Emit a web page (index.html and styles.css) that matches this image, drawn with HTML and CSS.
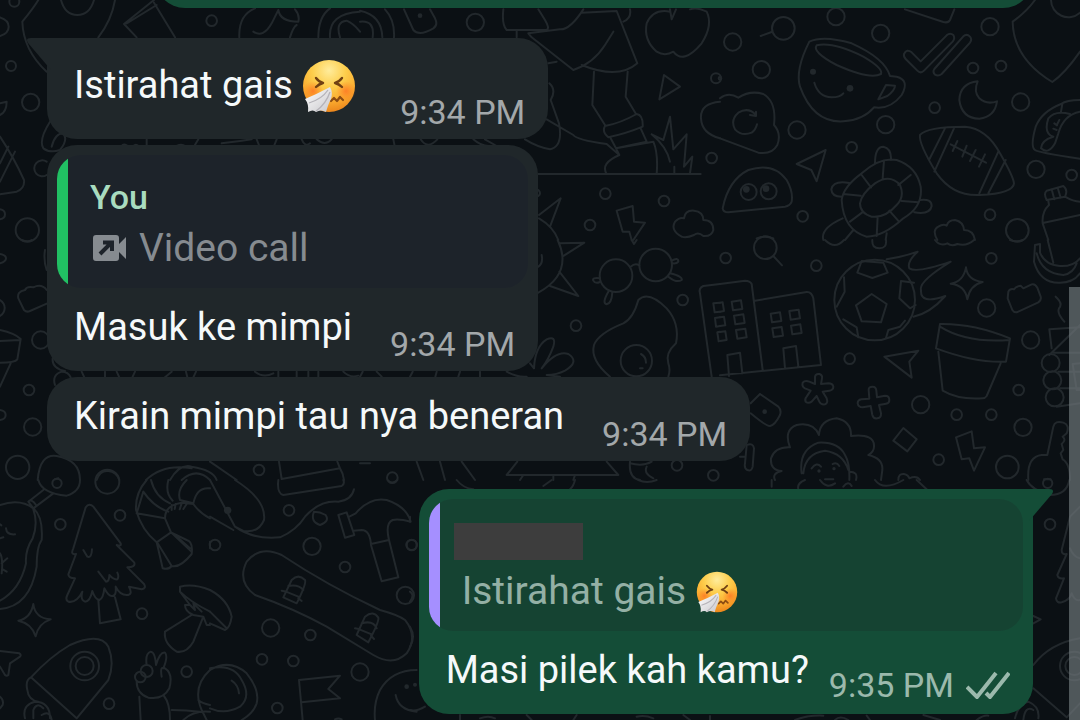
FILE: index.html
```
<!DOCTYPE html>
<html lang="id">
<head>
<meta charset="utf-8">
<meta name="viewport" content="width=device-width, initial-scale=1">
<title>Chat</title>
<link rel="stylesheet" href="styles.css">
</head>
<body>
<svg class="wallpaper" viewBox="0 0 1080 720" preserveAspectRatio="xMinYMin slice" aria-hidden="true">
  <!-- top left -->
  <g transform="scale(.33333)">
    <path d="M115 0Q100 25 67 65Q70 150 140 215M345 0Q335 60 295 112M183 0Q195 45 232 45T282 0M462 0L372 72L410 112M462 8L525 112M380 70L470 15M718 112Q715 45 765 25M760 95Q790 115 815 70L835 30Q840 65 895 65Q900 45 885 28M870 112Q880 80 890 75M955 112Q955 50 990 25M990 112Q985 40 1080 35M1020 112Q1005 65 1040 62Q1060 70 1080 95M0 52Q26 60 26 80T0 108M0 345Q20 335 20 305L0 310M0 410Q40 470 72 540Q75 565 50 575L0 583M45 455L0 545M25 440L0 490M150 365Q115 420 130 445Q150 460 180 450Q205 420 190 400Q165 400 155 440M0 628Q15 630 15 643T0 658M140 485A24 24 0 1 0 140 525"/>
    <path d="M365 438q5-8 15-2M400 438q8-8 15 0M440 418v20M530 438q15-8 25 0M595 418l-12 20M665 430q50-5 90-12M770 418l8 20M830 418l-8 20M905 418q10 25 25 12M950 418q25 22 45 0"/>
    <circle cx="635" cy="62" r="16"/><circle cx="43" cy="5" r="15"/><circle cx="33" cy="198" r="15"/><circle cx="92" cy="307" r="26"/><circle cx="82" cy="690" r="35"/>
  </g>
  <!-- top centre -->
  <g transform="translate(360 0) scale(.33333)">
    <path d="M0 32Q65 45 67 112M75 28Q105 60 102 112M0 65Q45 60 38 112M132 28L160 90Q178 110 220 85Q235 75 225 55L210 28M430 28Q425 75 440 90H560Q570 85 555 60L535 28M670 28Q630 90 600 88L505 100L515 112L640 210Q700 190 735 135L760 95M470 90V112M665 38L770 33L832 190Q775 240 665 195M790 65Q815 55 810 28M702 215L697 315L735 375M803 215L797 290L828 342M735 378Q725 395 745 412Q800 400 848 380Q850 345 830 342Q780 370 735 378M752 415L768 445L860 425L842 385M768 445L880 425Q895 460 890 522M768 445L778 465Q720 490 740 522M565 190L590 185M568 250Q590 270 572 300L597 370Q610 440 570 448Q530 440 495 418M560 358L640 405Q650 420 740 432L778 465M535 522H1022M875 403L910 420L930 350L940 448L980 403L972 500L997 470L990 520M875 403Q920 440 930 485M943 500V522"/>
    <path d="M935 58L930 28M935 58L948 28M930 35Q880 25 860 70Q850 120 890 155Q915 170 940 155Q970 195 1025 130Q1060 75 1040 35Q1010 20 990 28M912 225L960 260L898 298Z"/>
    <path d="M1080 305Q1020 310 1023 355Q1025 400 1080 415M537 645L602 595L570 680M537 655Q580 680 595 720M770 632L818 618L822 665L855 668L820 720M770 632L788 695H808L815 720M965 710Q930 690 945 665Q960 650 972 655Q975 630 1002 632Q1030 635 1030 660Q1060 660 1060 690Q1055 710 1030 708Q1015 695 1002 705Q980 715 965 710M535 570q10 10 0 18M100 418l4 20M182 418q20 32 50 0M340 418q25 22 50 20M375 418l35 20"/>
    <circle cx="180" cy="47" r="7" class="dot"/><circle cx="346" cy="67" r="26"/><circle cx="736" cy="581" r="16"/><circle cx="912" cy="603" r="16"/><circle cx="690" cy="675" r="16"/><circle cx="1055" cy="474" r="16"/><circle cx="1068" cy="235" r="15"/>
  </g>
  <!-- top right -->
  <g transform="translate(720 0) scale(.33333)">
    <circle cx="38" cy="126" r="26"/><circle cx="190" cy="85" r="34"/><path d="M122 108L155 96"/><circle cx="348" cy="50" r="26"/><circle cx="482" cy="100" r="26"/><circle cx="124" cy="209" r="26"/><circle cx="231" cy="390" r="26"/><circle cx="497" cy="374" r="26"/><circle cx="395" cy="442" r="16"/><circle cx="644" cy="323" r="16"/><circle cx="759" cy="204" r="16"/><circle cx="843" cy="198" r="16"/><circle cx="810" cy="80" r="26"/><circle cx="902" cy="306" r="26"/><circle cx="948" cy="508" r="26"/><circle cx="1055" cy="525" r="16"/><circle cx="810" cy="644" r="16"/><circle cx="892" cy="691" r="34"/><circle cx="248" cy="649" r="16"/><circle cx="0" cy="235" r="4"/>
    <path d="M555 28L670 66Q685 70 690 60L703 28M945 0Q920 35 878 65Q880 175 997 246Q1035 220 1080 155M993 0A52 52 0 0 0 1080 38"/>
    <path d="M268 125Q225 210 240 260Q280 370 370 364Q430 360 462 322Q510 330 545 285Q570 240 530 230L510 228Q495 175 395 130Q310 105 268 125ZM290 136Q340 125 430 170Q490 205 483 222Q450 240 350 195Q275 155 290 136ZM498 255L525 257Q525 270 502 288L475 298ZM283 248Q295 290 335 292Q360 292 370 280"/>
    <circle cx="279" cy="215" r="9" class="dot"/><circle cx="390" cy="265" r="10" class="dot"/>
    <path d="M575 157Q560 145 552 162Q550 170 557 177L592 212Q602 222 612 212L698 125Q706 115 700 105Q690 97 680 106L602 184ZM643 207L730 109Q740 100 750 110Q757 118 750 128L665 222Q655 230 645 224Q637 215 643 207Z"/>
    <path d="M773 244Q720 250 718 300Q725 355 778 356Q825 350 831 304Q800 315 778 295Q760 275 773 244Z"/>
    <path d="M0 295Q25 275 55 293Q90 270 130 282Q170 305 162 375Q185 400 172 435Q155 465 115 458L0 415M108 345Q85 320 55 338Q30 360 45 388Q65 410 95 398Q107 390 111 373M108 335V348L90 345"/>
    <path d="M230 492L317 450L290 544L274 510ZM8 625Q25 540 85 510Q160 485 200 540Q220 575 215 605Q210 618 195 620L25 637Q10 637 8 625Z"/>
    <circle cx="86" cy="576" r="24"/><circle cx="146" cy="574" r="24"/><circle cx="79" cy="568" r="10" class="dot"/><circle cx="138" cy="566" r="10" class="dot"/>
    <path d="M600 405Q620 380 735 380Q800 385 840 460Q880 530 882 550Q880 580 780 585Q700 590 650 520Q595 430 600 405ZM675 385L627 480M703 383L643 515M835 455L778 580M857 480L805 580M692 433L798 488M712 423L698 453M740 437L727 470M767 450L750 483M795 463L777 500"/>
    <path d="M365 600Q370 560 425 520Q480 470 530 480Q590 500 602 560Q610 620 550 655Q490 710 440 710Q370 690 365 600ZM420 610Q425 580 465 550Q510 520 540 555Q555 590 530 615Q495 655 455 650Q420 640 420 610ZM492 482L488 535M425 525L453 562M370 582L422 587M390 665L430 635M470 708L473 650M508 632L537 665M545 603L595 607M535 555L572 525M465 490Q465 440 490 440Q515 445 513 480M388 549Q340 540 334 568Q335 590 365 590M600 600Q635 595 635 618Q630 645 583 637M368 655Q300 685 310 720M400 690L375 720M500 700L497 720M110 715Q135 705 160 715M652 720Q635 690 655 680Q670 670 680 677Q685 660 705 660Q730 665 732 690Q760 690 765 720"/>
    <path d="M1080 300Q1040 300 1023 312Q965 335 947 380Q930 440 945 450Q955 458 1080 476M1023 335L1027 312M1080 335Q1030 345 1015 400L1005 430Q985 465 963 445Q965 420 1000 410M1000 410Q970 400 985 355Q1005 330 1050 342M1003 370l8 6M1018 360l-6 12M1000 386l10 4"/>
    <path d="M980 572Q970 580 980 600L1035 590Q1045 570 1030 558ZM995 568L1003 598M1013 563L1022 593M985 603L987 615Q965 635 968 670L985 720M1035 590Q1060 605 1080 605M972 668L1080 645"/>
  </g>
  <!-- middle left -->
  <g transform="translate(0 240) scale(.33333)">
    <path d="M65 0Q85 8 95 0M0 42Q18 45 18 55T0 70M0 180Q15 190 14 205T0 228M55 175Q50 155 75 150Q80 138 100 142Q125 130 140 150M55 175L72 210Q80 218 90 213L142 190M135 30Q130 60 140 90M0 270Q45 280 62 297L52 358Q45 368 0 368M0 303L60 300M32 370L0 440M0 510Q17 512 17 525T0 540M158 355Q155 385 195 393M165 435Q155 405 185 395Q205 395 212 412M245 395l8 17M315 395v17M350 395l8 17M405 395l-8 17M515 395l-20 17M558 395l4 17M588 395l-8 17M765 395q25 20 55 5M835 395v17M890 395v17M925 395v17M955 395v17M1030 395q20 20 45 12"/>
    <circle cx="122" cy="300" r="26"/><circle cx="87" cy="450" r="16"/><circle cx="98" cy="561" r="26"/><circle cx="53" cy="682" r="35"/><circle cx="777" cy="690" r="16"/>
    <path d="M113 720Q120 640 170 648Q240 660 240 720M165 718l10-3M290 720Q300 690 325 693T358 720M438 720Q490 670 575 685M510 720Q540 670 575 680Q640 690 650 720M545 720Q590 680 630 720M630 665L710 720M837 665L845 717L1020 685L1012 665M1020 685Q1030 700 1032 720"/>
  </g>
  <!-- middle centre -->
  <g transform="translate(360 240) scale(.33333)">
    <path d="M593 0Q640 100 535 158M600 10L673 8L607 50M598 95L655 168L570 138M545 45Q550 70 535 80"/>
    <circle cx="768" cy="107" r="49"/><circle cx="887" cy="75" r="49"/><path d="M812 80Q825 68 838 76M720 115Q695 112 700 122Q705 132 720 126M935 62Q955 50 955 65Q950 72 937 70M930 100Q970 110 965 120Q950 130 925 110M745 155Q725 190 740 193Q755 190 757 157M815 0L822 12L830 0"/>
    <circle cx="968" cy="180" r="16"/><circle cx="648" cy="257" r="16"/><circle cx="97" cy="713" r="16"/><circle cx="951" cy="676" r="16"/><circle cx="1060" cy="706" r="16"/>
    <path d="M750 410Q690 360 702 315Q715 280 790 250Q820 235 835 180Q865 150 920 205Q960 250 948 310Q915 340 925 370Q932 390 925 410"/><circle cx="829" cy="362" r="47"/><path d="M843 342Q858 350 858 368M840 385h8"/>
    <path d="M510 370L522 385Q525 320 560 298Q590 285 580 320Q565 360 545 385Q590 330 625 342Q660 365 615 392Q590 405 560 405L600 410M440 395Q470 412 500 410M0 410l8-15M50 395l15 15M158 395l-8 15M230 395l-4 15M300 395l-5 15M360 395v15"/>
    <path d="M1055 410L1020 160Q1015 145 1030 138L1080 132M1080 188L1060 190L1064 217L1080 215M1080 232L1065 234L1068 260L1080 258M1080 275L1072 277L1076 304"/>
    <path d="M170 665L190 720M240 665L255 720M305 665L345 720M472 665L440 705H775L740 665M490 705L480 720M580 705V720M645 705L640 720M810 665Q805 715 840 720M810 670Q850 680 875 665M860 680Q850 700 880 715M0 670h30"/>
  </g>
  <!-- middle right -->
  <g transform="translate(720 240) scale(.33333)">
    <circle cx="136" cy="23" r="34"/><path d="M160 48L186 76"/><circle cx="17" cy="54" r="16"/><circle cx="289" cy="77" r="16"/><circle cx="814" cy="55" r="16"/><circle cx="800" cy="204" r="26"/><circle cx="932" cy="300" r="26"/><circle cx="389" cy="356" r="16"/><circle cx="602" cy="494" r="26"/><circle cx="710" cy="524" r="16"/><circle cx="814" cy="524" r="16"/><circle cx="896" cy="450" r="16"/><circle cx="909" cy="562" r="26"/><circle cx="656" cy="659" r="16"/><circle cx="862" cy="681" r="34"/>
    <path d="M315 0Q345 30 372 0M457 0Q455 25 478 25T498 0M645 0Q660 20 682 10Q695 20 712 12Q740 20 762 0M870 0Q890 8 908 0"/>
    <path d="M0 132L75 122Q90 122 95 132L128 390M0 406L303 375L280 175Q275 155 260 156L105 182M27 408L22 345L60 338L67 400M195 385L190 325L228 318L235 380M35 185l28-4 4 26-28 4ZM42 227l28-4 4 26-28 4ZM48 270l28-4 4 26-28 4ZM152 221l28-4 4 26-28 4ZM157 265l28-4 4 26-28 4ZM208 213l28-4 4 26-28 4ZM213 257l28-4 4 26-28 4ZM0 188l8-1 4 26-12 2M0 232l12-2 4 26-16 2M0 276l16-2 4 26-20 3"/>
    <circle cx="464" cy="180" r="121"/>
    <path d="M455 162L500 192L483 247L425 244L408 196ZM412 98L425 63L490 68L503 98L457 114ZM582 128L543 123L538 175L570 205L587 195M372 112L374 155L350 200M370 238L410 262L415 292M498 294L505 270L540 260L555 242M500 58Q550 50 593 35Q560 65 568 85Q590 100 692 65Q595 125 603 150Q600 195 676 168Q630 220 580 230"/>
    <path d="M738 82Q742 120 788 126Q750 135 742 178Q735 135 692 131Q730 125 738 82ZM865 155Q870 145 882 148Q890 138 902 137L910 145L935 133Q945 130 952 143L962 170Q965 180 955 187L890 217Q882 218 877 210L863 175Z"/>
    <path d="M660 252Q760 250 870 295L858 365Q770 370 648 325ZM660 260Q740 310 868 300M655 335L668 452Q715 480 788 475Q795 475 800 468L842 370"/>
    <path d="M493 350L595 332L568 365L575 413ZM285 410Q287 400 298 402Q308 405 306 415L303 432L325 430Q338 430 340 440Q340 450 328 452L308 455L320 475Q325 490 315 493Q303 495 298 485L290 468L275 485Q265 492 257 485Q253 478 260 470L272 452L255 445Q245 440 248 428Q255 420 268 425L285 432ZM446 450Q445 440 458 440Q468 440 469 452L471 472L495 467Q508 467 508 480Q508 490 498 491L477 495L483 520Q484 533 472 535Q460 537 457 525L452 498L428 502Q415 502 413 490Q413 480 424 478L448 476Z"/>
    <path d="M120 462L175 500Q185 510 180 525Q165 555 150 558Q140 560 92 520M92 490L120 462M550 564L590 598L562 634L520 602ZM708 592L755 574L762 625L795 622L762 692L748 655L725 658Z"/><circle cx="134" cy="515" r="7" class="dot"/>
    <path d="M80 615Q100 608 102 625L98 680Q95 695 82 690Q72 685 75 670L80 615M60 650h15M165 720Q155 700 185 693Q150 690 153 655Q165 620 210 622Q190 570 230 555Q280 545 297 585Q300 540 350 535Q395 545 393 588Q465 580 462 620Q462 635 445 645Q490 655 487 690L483 720M245 700Q235 630 295 608Q355 605 375 645Q390 670 388 720M250 700Q255 640 315 632Q370 640 385 690M275 685Q290 665 303 680M338 672Q350 665 358 678M388 695Q415 695 408 720M315 718h25M535 720Q535 700 552 702Q565 705 568 715Q590 705 600 720"/><circle cx="297" cy="693" r="5" class="dot"/><circle cx="342" cy="686" r="5" class="dot"/>
    <path d="M945 15L960 12L960 38Q975 75 1020 78Q1060 80 1080 55M945 15L942 65Q960 130 1020 128Q1060 128 1080 100M950 40Q965 100 1030 105Q1060 100 1070 70M983 0L1000 68M1007 170Q1030 190 1017 205Q1010 220 1033 245M1080 262L988 268L995 325M988 345L1080 255M1000 338H1080M1015 395H1080M1020 445H1080M1010 500L1080 490M1058 372L1080 370M1058 372L1070 450H1080M925 720Q920 650 965 645H982L1000 560Q1005 540 1030 548Q1050 555 1040 580L1028 590Q1040 600 1025 612L1030 630L1022 640L1028 658Q1050 670 1050 720M972 718h20"/><circle cx="992" cy="369" r="27"/><circle cx="997" cy="421" r="27"/><circle cx="1004" cy="472" r="27"/>
  </g>
  <!-- bottom left -->
  <g transform="translate(0 480) scale(.33333)">
    <circle cx="171" cy="10" r="14"/><circle cx="322" cy="5" r="36"/><circle cx="181" cy="133" r="16"/><circle cx="360" cy="106" r="16"/><circle cx="426" cy="401" r="16"/><circle cx="560" cy="575" r="16"/><circle cx="327" cy="671" r="16"/><circle cx="254" cy="558" r="43"/><circle cx="254" cy="558" r="27"/>
    <path d="M115 0Q125 40 200 47Q240 35 240 0M130 30L85 65L100 85L160 40M85 65Q95 55 108 75M0 75Q60 55 100 85Q130 110 125 180Q110 200 110 260Q90 380 0 387M100 88Q115 130 98 175Q75 210 78 250Q60 330 0 362M18 145Q20 165 45 163M0 175l10-3M0 220Q10 235 5 280M5 250L22 235M8 268L20 275M0 133l4 3M0 650Q12 660 8 675L0 685"/>
    <path d="M257 82Q268 68 280 80L362 190Q365 200 350 195L403 248Q407 262 382 262L432 312Q440 325 425 328L387 320Q400 345 380 345Q360 345 347 320Q350 350 335 348Q325 348 313 325Q310 355 298 360Q285 358 277 333Q270 365 255 365Q240 360 247 335Q230 370 205 365Q195 360 202 345L225 295Q205 295 205 283L228 222Q210 225 220 205L257 82ZM250 210L262 230Q275 235 276 208M295 275L318 305Q328 305 328 285Q340 300 352 298Q358 290 352 278M295 360L300 430L362 418L345 352"/>
    <path d="M100 372Q105 415 152 418Q115 430 107 469Q95 430 55 422Q92 415 100 372ZM0 513L58 520Q65 525 60 530L30 550L25 585Q20 590 15 585L0 560M93 592Q150 530 210 495Q300 455 325 500Q345 550 325 600L230 715L93 592M93 592Q75 600 82 630Q85 660 115 665M75 715Q65 675 105 665Q150 665 150 715M100 715V690Q110 665 130 685M125 705Q150 690 155 720"/>
    <path d="M440 0Q405 40 408 90Q425 150 470 187L488 265Q505 270 515 258Q540 265 575 222Q580 185 560 180L513 157M430 35L410 100L495 115L513 157L470 187M430 35Q460 80 505 95M453 0Q465 50 510 70M505 0Q495 40 518 62M560 0Q530 30 540 60L580 70Q590 20 630 25M495 115Q495 75 545 68L580 72Q600 100 630 115M515 75v15M527 72l-3 15M545 70l-6 18M560 72l-10 15M513 157L575 215M525 165L570 205M473 190L515 258M630 185v20"/>
    <path d="M630 330Q580 310 540 320L540 335Q570 365 630 395M540 335L570 375L555 375Q555 395 580 405L610 410L620 435L630 435M570 375L585 390L580 370L605 395M575 405L495 455Q490 490 530 515Q560 520 580 485L610 410"/>
    <path d="M440 555Q435 520 452 515Q465 515 468 555Q480 515 495 518Q505 530 490 565Q480 560 485 590M495 565Q520 580 508 625Q490 660 445 653Q410 640 410 605M418 650L422 720M492 648Q510 670 510 720M515 690Q560 690 600 695M550 720Q580 690 630 695M630 570Q575 620 605 690L620 720M595 660Q605 670 630 675"/><circle cx="440" cy="573" r="18"/><circle cx="421" cy="591" r="16"/>
  </g>
  <g transform="translate(210 480) scale(.33333)">
    <circle cx="237" cy="91" r="16"/><circle cx="15" cy="195" r="16"/><circle cx="306" cy="199" r="26"/><circle cx="405" cy="261" r="16"/><circle cx="182" cy="444" r="26"/><circle cx="301" cy="465" r="16"/><circle cx="156" cy="538" r="16"/><circle cx="250" cy="543" r="16"/><circle cx="450" cy="576" r="26"/><circle cx="202" cy="684" r="16"/><circle cx="586" cy="346" r="26"/><circle cx="605" cy="195" r="16"/>
    <path d="M75 0Q170 60 162 120Q145 160 100 153L75 140L0 0M0 110L70 150M75 140Q130 180 210 172Q260 150 285 110Q330 60 385 65Q425 60 432 28M312 95Q300 125 330 135Q360 125 347 105Q330 95 312 95M205 0Q200 40 220 45L395 18Q405 12 400 0M533 0Q545 15 562 0"/><circle cx="53" cy="91" r="11" class="dot"/>
    <path d="M385 105L410 97L433 165L405 173ZM418 110L437 100Q480 50 530 60Q590 80 602 125Q565 115 548 120Q525 130 537 180L565 292L515 304L483 195Q480 150 455 150L430 152M483 192L537 180"/>
    <path d="M215 225Q150 195 110 245Q80 305 135 345Q250 385 350 440L490 525Q550 560 590 520Q625 470 585 420Q565 405 510 390Q350 315 215 225ZM245 300Q265 280 285 300Q290 310 260 370L220 352ZM235 318Q265 312 280 330M228 335L265 350M215 332L230 335M265 355L275 363M465 410Q490 390 505 413Q508 425 475 487L440 465ZM455 430Q490 420 500 445M448 448L485 463M435 445L450 448M483 467L492 477"/>
    <path d="M0 330Q55 360 65 410Q60 445 45 450L0 430M0 395L50 445M0 570Q60 535 110 580Q150 630 140 670Q130 700 95 720M0 565Q70 550 95 600Q125 650 90 680Q45 705 0 685M65 602Q85 615 87 640M278 720L267 600L390 587L355 627L390 655L275 667M375 718q10-5 20 0M620 570Q545 570 510 630Q490 670 495 720M557 645Q565 690 620 695"/><circle cx="590" cy="620" r="7" class="dot"/><circle cx="615" cy="614" r="6" class="dot"/>
  </g>
  <g transform="translate(410 480) scale(.33333)"><path d="M140 0Q160 25 190 28M400 18L425 0M495 0Q490 20 480 28M685 0Q710 12 740 0M0 110v15M0 335Q15 345 0 365M0 440Q18 470 0 500"/><path d="M0 690Q20 695 45 680M150 705v15M210 715q25-10 45 0M350 705l15 15M500 705l-10 15M680 710q25-6 50 5M820 705l20 15M900 708v12"/><circle cx="5" cy="195" r="15"/></g>
  <g transform="translate(760 480) scale(.33333)">
    <path d="M35 20V0M115 28Q110 10 135 0M180 0Q200 28 225 10M250 20Q265 0 275 18M345 0Q370 35 430 0M470 0L500 28M800 0Q815 30 870 45Q920 45 928 0M960 80L930 110L905 210Q905 225 920 222L892 285Q895 298 912 295L888 355Q890 370 905 367Q930 360 935 340Q945 365 960 360M930 205Q940 230 960 235M820 408L842 418L820 430M820 555Q870 490 960 475M820 625L920 712L960 670M765 715Q775 670 805 665Q840 680 835 715M790 720Q795 675 820 690M105 720Q145 705 190 707M225 720Q240 705 265 720M320 707l10 13M490 705L540 720M650 720q20-15 35-13"/><circle cx="863" cy="10" r="14"/><circle cx="870" cy="133" r="16"/><circle cx="943" cy="558" r="43"/><circle cx="943" cy="558" r="27"/>
  </g>
</svg>

<svg class="symbols" aria-hidden="true">
  <defs>
    <radialGradient id="face" cx="50%" cy="20%" r="80%">
      <stop offset="0" stop-color="#ffec9c"/><stop offset=".4" stop-color="#fdce4c"/><stop offset=".75" stop-color="#faaa2e"/><stop offset="1" stop-color="#ec861c"/>
    </radialGradient>
    <radialGradient id="blush"><stop offset="0" stop-color="#ff6a20" stop-opacity=".7"/><stop offset="1" stop-color="#ff7a20" stop-opacity="0"/></radialGradient>
    <linearGradient id="tissue" x1="0" x2="1" y1="0" y2="1"><stop offset="0" stop-color="#ffffff"/><stop offset="1" stop-color="#c9c8cc"/></linearGradient>
  </defs>
  <symbol id="sneeze" viewBox="0 0 54 54">
    <circle cx="27" cy="27" r="26" fill="url(#face)"/>
    <circle cx="11" cy="32" r="10" fill="url(#blush)"/><circle cx="44" cy="32" r="10" fill="url(#blush)"/>
    <path d="M14 19q3 4 7 5q-4 1-7 4M40 19q-3 4-7 5q4 1 7 4" fill="none" stroke="#704013" stroke-width="2.4" stroke-linecap="round" stroke-linejoin="round"/>
    <path d="M29 42L32 39L35 42L38 38L41 41" fill="none" stroke="#8c4c12" stroke-width="2.2" stroke-linecap="round" stroke-linejoin="round"/>
    <path d="M28 28Q15 35 3 40Q7 45 6 53Q11 50 14 53Q19 50 24 53Q27 43 29 40Q31 33 28 28Z" fill="url(#tissue)"/>
    <path d="M26 31Q20 40 7 44M28 33Q24 45 14 52" fill="none" stroke="#b5b3b9" stroke-width="1.3"/>
  </symbol>
</svg>

<main class="chat">
  <article class="message message--out message--previous" aria-label="Previous message"></article>

  <article class="message message--in message--first">
    <svg class="tail tail--in" viewBox="0 0 24 32" aria-hidden="true"><path d="M24 0H4Q-2 0 1 5L24 32Z"/></svg>
    <div class="body">
      <p class="text text--emoji">Istirahat gais <svg class="emoji" role="img" aria-label="Sneezing face"><use href="#sneeze"/></svg></p>
      <time class="time">9:34 PM</time>
    </div>
  </article>

  <article class="message message--in">
    <blockquote class="quote">
      <p class="quote-name">You</p>
      <p class="quote-text"><svg class="video" viewBox="0 0 34 26" aria-hidden="true"><path class="video-body" d="M3 0H23Q26 0 26 3V9L33 2V24L26 17V23Q26 26 23 26H3Q0 26 0 23V3Q0 0 3 0Z"/><path class="video-arrow" d="M7 19L18 8M10 7.500H19V16"/></svg>Video call</p>
    </blockquote>
    <div class="body">
      <p class="text">Masuk ke mimpi</p>
      <time class="time">9:34 PM</time>
    </div>
  </article>

  <article class="message message--in">
    <div class="body">
      <p class="text">Kirain mimpi tau nya beneran</p>
      <time class="time">9:34 PM</time>
    </div>
  </article>

  <article class="message message--out message--reply">
    <svg class="tail tail--out" viewBox="0 0 24 32" aria-hidden="true"><path d="M0 0H20Q26 0 23 5L0 32Z"/></svg>
    <blockquote class="quote quote--contact">
      <div class="redacted"></div>
      <p class="quote-text">Istirahat gais <svg class="emoji emoji--small" role="img" aria-label="Sneezing face"><use href="#sneeze"/></svg></p>
    </blockquote>
    <div class="body">
      <p class="text">Masi pilek kah kamu?</p>
      <span class="status"><time class="time">9:35 PM</time><svg class="ticks" viewBox="0 0 44 28" role="img" aria-label="Delivered"><path d="M1 16L11 26L30 2M20 22L24 26L43 2"/></svg></span>
    </div>
  </article>
</main>
<div class="scroll-thumb"></div>
</body>
</html>
```
FILE: styles.css
```
* { box-sizing: border-box; }

body {
  position: relative;
  min-height: 100vh;
  margin: 0;
  overflow: hidden;
  background: #0b1014;
  color: #f5f9fa;
  font-family: Roboto, "Noto Sans", sans-serif;
}

p, blockquote { margin: 0; }

.wallpaper {
  position: absolute;
  inset: 0;
  width: 100%;
  height: 100%;
  fill: none;
  stroke: #22282c;
  stroke-width: 6;
  stroke-linejoin: round;
  stroke-linecap: round;
}
.wallpaper .dot { fill: #22282c; stroke: none; }

.symbols { position: absolute; width: 0; height: 0; }

.chat {
  position: relative;
  display: flex;
  flex-direction: column;
  align-items: flex-start;
  gap: 6px;
  padding: 0 47px;
}

.message {
  position: relative;
  max-width: 90%;
  border-radius: 30px;
}
.message--in { background: #20272a; fill: #20272a; }
.message--out { align-self: flex-end; background: #144d37; fill: #144d37; }
.message--first { margin-top: 24px; border-top-left-radius: 0; }
.message--reply { margin-top: 22px; border-top-right-radius: 0; }
.message--previous {
  width: 89%;
  height: 72px;
  margin-top: -64px;
}

.tail { position: absolute; top: 0; width: 24px; height: 32px; }
.tail--in { left: -20px; }
.tail--out { right: -20px; }

.body {
  display: flex;
  align-items: flex-end;
  justify-content: space-between;
  gap: 38px;
  padding: 15px 23px 7px 27px;
}
.text {
  padding-bottom: 14px;
  font-size: 38px;
  line-height: 48px;
}
.text--emoji { line-height: 65px; }
.emoji {
  width: 54px;
  height: 54px;
  margin: -4px 6px 0 0;
  vertical-align: middle;
}
.emoji--small { width: 42px; height: 42px; }
.time {
  color: #a3a8aa;
  font-size: 34px;
  line-height: 40px;
  white-space: nowrap;
}

.quote {
  margin: 10px 10px 0;
  padding: 20px 33px 16px;
  border-radius: 24px;
  background: linear-gradient(90deg, #21c063 11px, #1d232a 11px);
}
.quote + .body .text { padding-bottom: 13px; }
.quote-name {
  margin-bottom: 5px;
  color: #a9dcbf;
  font-size: 34px;
  font-weight: 500;
  line-height: 44px;
}
.quote-text {
  color: #868b90;
  font-size: 39px;
  line-height: 48px;
}
.video { width: 34px; height: 26px; margin: 0 12px 0 3px; }
.video-body { fill: #868b90; }
.video-arrow { fill: none; stroke: #1d232a; stroke-width: 4; }

.quote--contact {
  padding-top: 24px;
  background: linear-gradient(90deg, #a58fff 11px, #154332 11px);
}
.quote--contact .quote-text { color: #94b0a5; }
.redacted {
  width: 129px;
  height: 37px;
  margin: 0 0 7px -8px;
  background: #3d3d3d;
}

.quote + .body { padding-top: 15px; }
.message--reply .body { gap: 20px; }
.status { display: flex; align-items: center; gap: 12px; padding-bottom: 2px; }
.status .time { color: #9bb9ac; }
.ticks {
  width: 44px;
  height: 28px;
  fill: none;
  stroke: #9bb9ac;
  stroke-width: 4;
}

.scroll-thumb {
  position: absolute;
  top: 287px;
  right: 0;
  bottom: 0;
  width: 11px;
  background: rgba(112, 121, 124, 0.68);
}
```
